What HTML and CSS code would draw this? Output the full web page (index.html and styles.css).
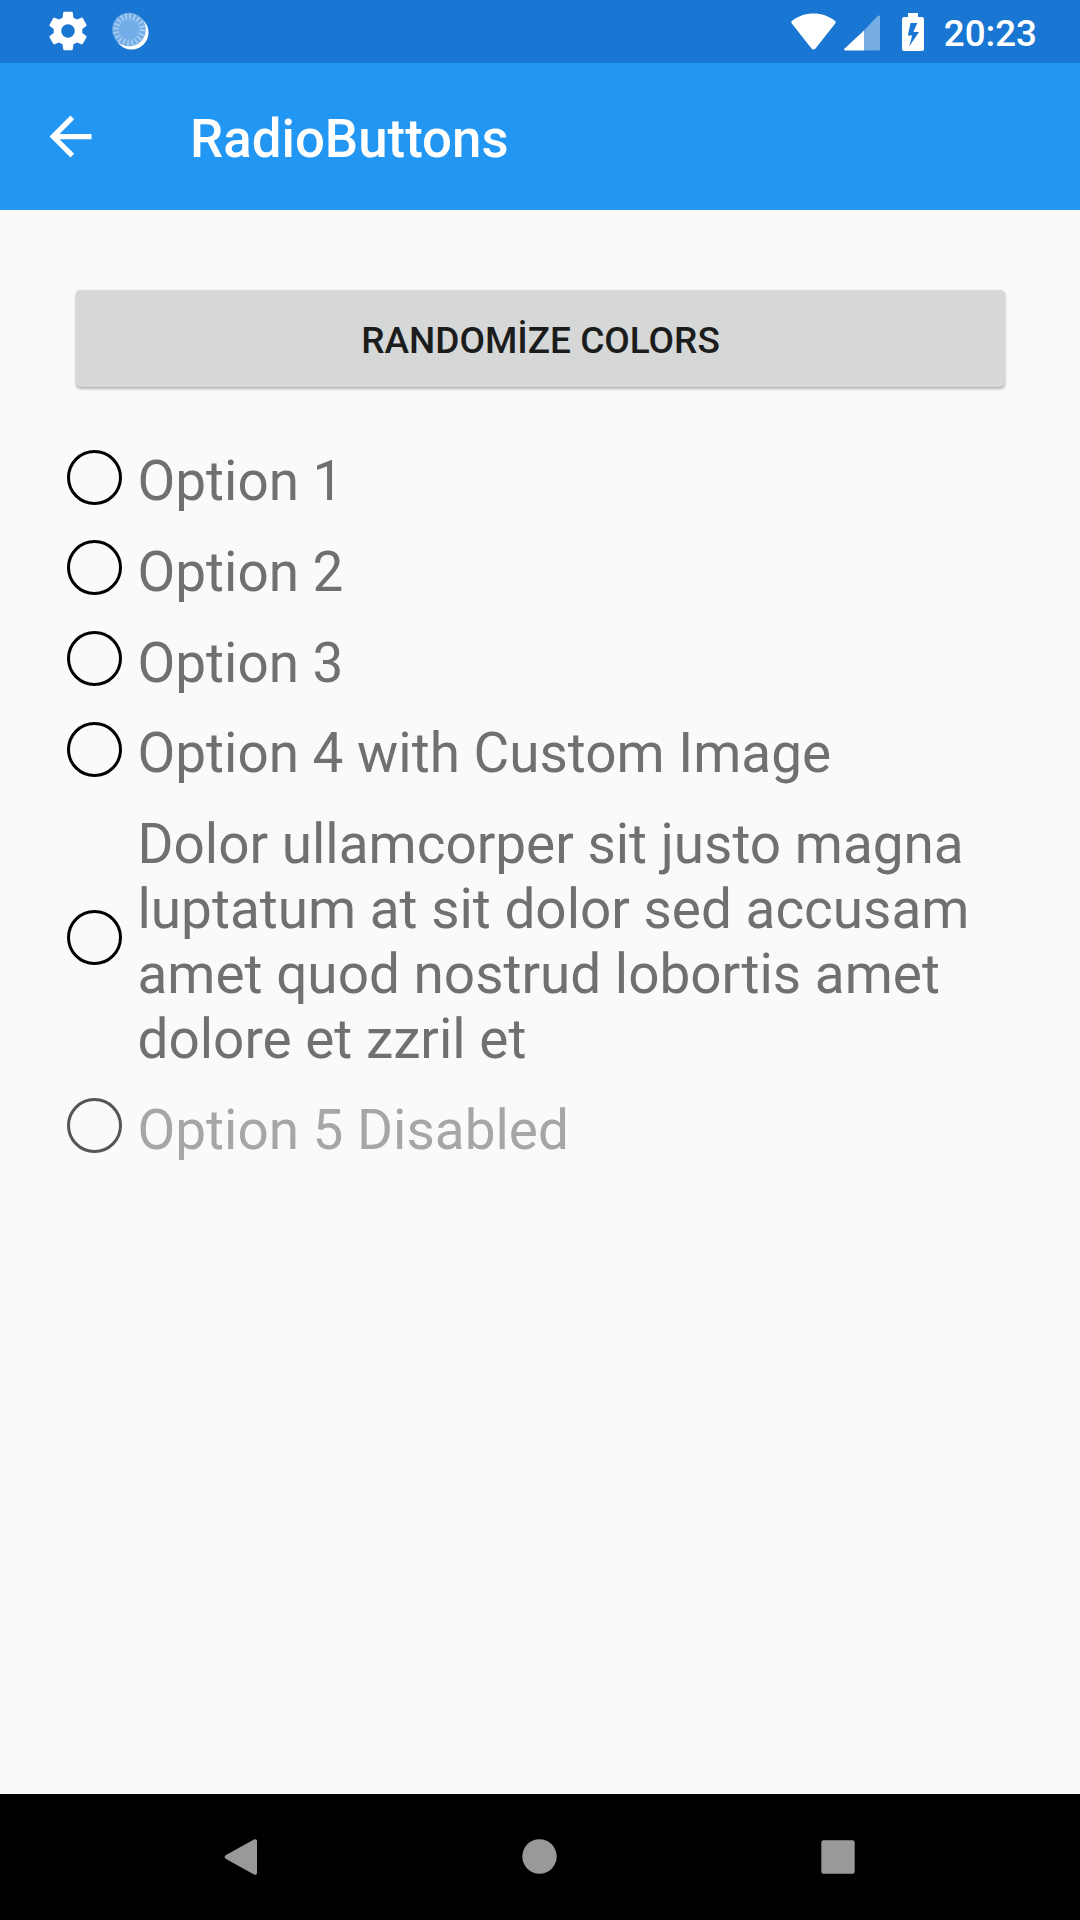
FILE: index.html
```html
<!DOCTYPE html>
<html lang="en">
<head>
<meta charset="utf-8">
<title>RadioButtons</title>
<link rel="stylesheet" href="styles.css">
</head>
<body>
<div class="screen">
  <header class="status-bar">
    <div class="notifications">
      <svg class="gear" viewBox="0 0 24 24"><path d="M19.43 12.98c.04-.32.07-.64.07-.98s-.03-.66-.07-.98l2.11-1.65c.19-.15.24-.42.12-.64l-2-3.46c-.12-.22-.39-.3-.61-.22l-2.49 1c-.52-.4-1.08-.73-1.69-.98l-.38-2.65C14.46 2.18 14.25 2 14 2h-4c-.25 0-.46.18-.49.42l-.38 2.65c-.61.25-1.17.59-1.69.98l-2.49-1c-.23-.09-.49 0-.61.22l-2 3.46c-.13.22-.07.49.12.64l2.11 1.65c-.04.32-.07.65-.07.98s.03.66.07.98l-2.11 1.65c-.19.15-.24.42-.12.64l2 3.46c.12.22.39.3.61.22l2.49-1c.52.4 1.08.73 1.69.98l.38 2.65c.03.24.24.42.49.42h4c.25 0 .46-.18.49-.42l.38-2.65c.61-.25 1.17-.59 1.69-.98l2.49 1c.23.09.49 0 .61-.22l2-3.46c.12-.22.07-.49-.12-.64l-2.11-1.65zM12 15.500c-1.930 0-3.500-1.570-3.500-3.500s1.570-3.500 3.500-3.500 3.500 1.570 3.500 3.500-1.570 3.500-3.500 3.500z"/></svg>
      <svg class="progress" viewBox="0 0 40 40">
        <circle class="progress-edge" cx="20.500" cy="21.500" r="17"/>
        <circle class="progress-face" cx="18" cy="18.500" r="16.800"/>
        <circle class="progress-ticks" cx="18" cy="18.500" r="13"/>
      </svg>
    </div>
    <div class="indicators">
      <svg class="wifi" viewBox="0 0 45 37"><path d="M22.500 36.500c-.8 0-1.500-.4-2-1L.8 10.600C0 9.500.1 8.600 1.200 7.800 7.200 3 14.500.5 22.500.5s15.300 2.500 21.300 7.300c1.100.8 1.200 1.700.4 2.800L24.500 35.500c-.5.6-1.200 1-2 1z"/></svg>
      <svg class="signal" viewBox="0 0 36 36"><path class="signal-rest" d="M20 15.500 33.600 1C34.800-.1 36 .3 36 2v32c0 1-.6 1.600-1.600 1.600H20z"/><path d="M20 15.500v20.100H1.600C0 35.600-.3 34.400.7 33.400z"/></svg>
      <svg class="battery" viewBox="0 0 22 38"><path fill-rule="evenodd" d="M6 0h10v4h4a2 2 0 0 1 2 2v30a2 2 0 0 1-2 2H2a2 2 0 0 1-2-2V6a2 2 0 0 1 2-2h4zM8.500 10 5.900 22.500h4.300L7.200 33.500 17 19h-5.700l4-9z"/></svg>
      <span class="clock">20:23</span>
    </div>
  </header>
  <div class="app-bar">
    <svg class="back" viewBox="0 0 24 24"><path d="M20 11H7.830l5.590-5.590L12 4l-8 8 8 8 1.410-1.410L7.830 13H20v-2z"/></svg>
    <h1 class="title">RadioButtons</h1>
  </div>
  <main class="content">
    <button class="randomize" type="button">RANDOMİZE COLORS</button>
    <div class="options">
      <div class="option"><span class="radio"></span><span class="label">Option 1</span></div>
      <div class="option"><span class="radio"></span><span class="label">Option 2</span></div>
      <div class="option"><span class="radio"></span><span class="label">Option 3</span></div>
      <div class="option"><span class="radio"></span><span class="label">Option 4 with Custom Image</span></div>
      <div class="option"><span class="radio"></span><span class="label">Dolor ullamcorper sit justo magna luptatum at sit dolor sed accusam amet quod nostrud lobortis amet dolore et zzril et</span></div>
      <div class="option disabled"><span class="radio"></span><span class="label">Option 5 Disabled</span></div>
    </div>
  </main>
  <nav class="nav-bar">
    <svg class="nav-icon" viewBox="0 0 40 40"><path d="M33 2.500c1.500-.8 3-.1 3 1.500v32c0 1.600-1.500 2.300-3 1.500L5 22c-1.800-1-1.800-3 0-4z"/></svg>
    <svg class="nav-icon" viewBox="0 0 40 40"><circle cx="19.500" cy="19.500" r="17.200"/></svg>
    <svg class="nav-icon" viewBox="0 0 40 40"><rect x="3.300" y="3.300" width="33.400" height="33.400" rx="2.500"/></svg>
  </nav>
</div>
</body>
</html>
```
FILE: styles.css
```css
* {
  box-sizing: border-box;
}

body {
  margin: 0;
  font-family: Roboto, sans-serif;
}

svg {
  display: block;
  flex: none;
  fill: #fff;
}

.screen {
  display: flex;
  flex-direction: column;
  width: 1080px;
  height: 1920px;
  background: #fafafa;
}

.status-bar {
  display: flex;
  flex: none;
  justify-content: space-between;
  height: 63px;
  padding: 0 43px 0 45px;
  background: #1976d2;
  color: #fff;
}

.notifications,
.indicators {
  display: flex;
  align-items: center;
}

.notifications {
  gap: 20px;
  padding-bottom: 1px;
}

.gear {
  width: 46px;
  height: 46px;
}

.progress {
  width: 40px;
  height: 40px;
}

.progress-face {
  fill: #73ade8;
}

.progress-ticks {
  fill: none;
  stroke: #a9cef3;
  stroke-width: 6;
  stroke-dasharray: 1.6 2.484;
}

.wifi {
  width: 45px;
  height: 37px;
  margin-right: 8px;
}

.signal {
  width: 36px;
  height: 36px;
  margin: 2px 22px 0 0;
}

.signal-rest {
  fill: #75ade4;
}

.battery {
  width: 22px;
  height: 38px;
  margin-right: 20px;
}

.clock {
  padding-top: 3px;
  font-size: 36.75px;
  font-weight: 500;
  line-height: 43px;
}

.app-bar {
  display: flex;
  flex: none;
  align-items: center;
  gap: 88px;
  height: 147px;
  padding-left: 39px;
  background: #2196f3;
}

.back {
  width: 63px;
  height: 63px;
  margin-bottom: 1px;
}

.title {
  margin: 0;
  padding-top: 4px;
  color: #fff;
  font-size: 52.8px;
  font-weight: 500;
  line-height: 62px;
}

.content {
  flex: 1;
  padding: 80px 63px 0 66px;
}

.randomize {
  display: block;
  width: 929px;
  height: 97px;
  margin: 0 0 62px 10px;
  padding: 4px 0 0;
  border: 0;
  border-radius: 5px;
  background: #d6d7d7;
  box-shadow: 0 2px 3px rgba(0, 0, 0, 0.28), 0 0 2px rgba(0, 0, 0, 0.1);
  color: #1b1c1c;
  font-family: inherit;
  font-size: 37px;
  font-weight: 500;
  line-height: 44px;
}

.options {
  display: flex;
  flex-direction: column;
  gap: 25.8px;
}

.option {
  display: flex;
  align-items: center;
  gap: 16px;
}

.radio {
  flex: none;
  width: 55px;
  height: 55px;
  margin: 0 0 9px 0.5px;
  border: 3px solid #000;
  border-radius: 50%;
}

.label {
  color: #707070;
  font-size: 54.9px;
  line-height: 65px;
}

.disabled .radio {
  border-color: #555;
}

.disabled .label {
  color: #a6a6a6;
}

.nav-bar {
  display: flex;
  flex: none;
  align-items: center;
  justify-content: space-between;
  height: 126px;
  padding: 0 222px 0 221px;
  background: #000;
}

.nav-icon {
  width: 40px;
  height: 40px;
  fill: #999;
}
```
